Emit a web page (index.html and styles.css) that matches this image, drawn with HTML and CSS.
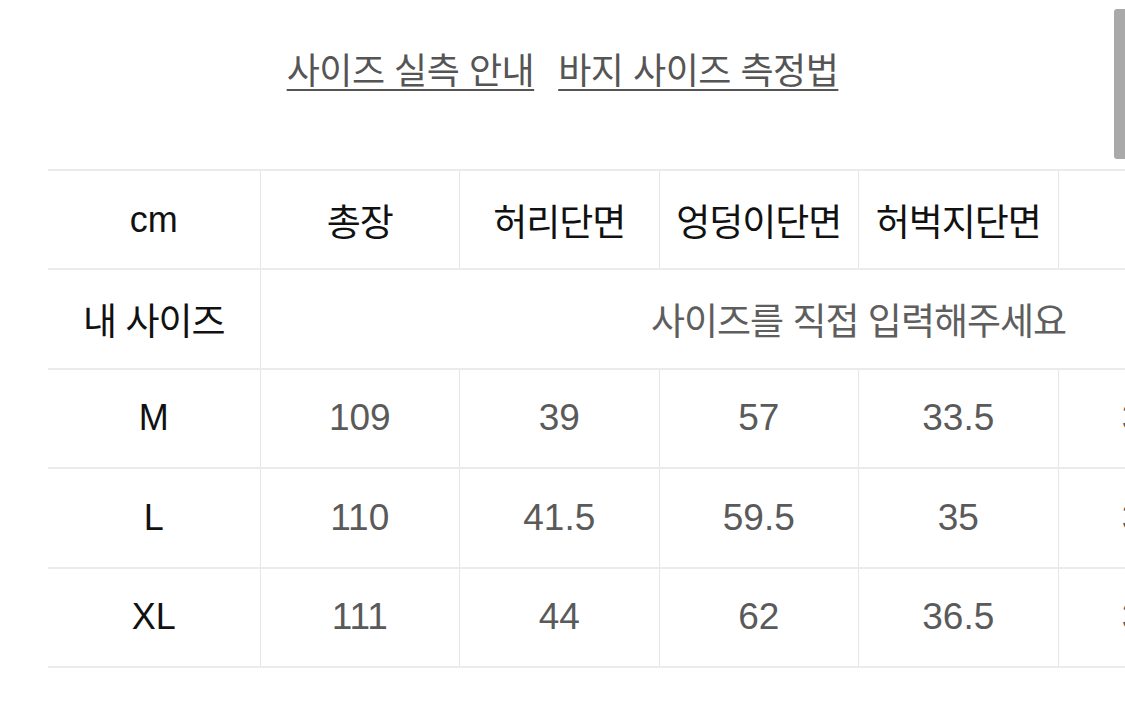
FILE: index.html
```html
<!DOCTYPE html>
<html lang="ko">
<head>
<meta charset="utf-8">
<title>사이즈 실측 안내</title>
<link rel="stylesheet" href="styles.css">
</head>
<body>
<div class="page">
  <nav class="links">
    <a class="link" href="#">사이즈 실측 안내</a>
    <a class="link" href="#">바지 사이즈 측정법</a>
  </nav>
  <div class="table-wrap">
    <table class="size-table">
      <colgroup>
        <col class="c-first">
        <col class="c-data"><col class="c-data"><col class="c-data"><col class="c-data"><col class="c-data"><col class="c-data">
      </colgroup>
      <tr class="head">
        <th class="latin">cm</th>
        <th>총장</th>
        <th>허리단면</th>
        <th>엉덩이단면</th>
        <th>허벅지단면</th>
        <th>밑위</th>
        <th>밑단단면</th>
      </tr>
      <tr>
        <th>내 사이즈</th>
        <td colspan="6" class="hint">사이즈를 직접 입력해주세요</td>
      </tr>
      <tr>
        <th class="latin">M</th>
        <td>109</td><td>39</td><td>57</td><td>33.5</td><td>34.5</td><td>22</td>
      </tr>
      <tr>
        <th class="latin">L</th>
        <td>110</td><td>41.5</td><td>59.5</td><td>35</td><td>35.5</td><td>23</td>
      </tr>
      <tr>
        <th class="latin">XL</th>
        <td>111</td><td>44</td><td>62</td><td>36.5</td><td>36.5</td><td>24</td>
      </tr>
    </table>
  </div>
</div>
<div class="scroll-thumb"></div>
</body>
</html>
```
FILE: styles.css
```css
html, body {
  margin: 0;
  padding: 0;
  background: #ffffff;
  overflow: hidden;
}
body {
  width: 1125px;
  height: 721px;
  font-family: "Liberation Sans", "Noto Sans CJK KR", sans-serif;
}
.page {
  display: flex;
  flex-direction: column;
}
.links {
  display: flex;
  justify-content: center;
  gap: 24px;
  padding-top: 46px;
  height: 169px;
  box-sizing: border-box;
}
.link {
  font-family: "Noto Sans CJK KR", sans-serif;
  font-size: 36px;
  line-height: 44px;
  letter-spacing: -0.5px;
  height: 50px;
  color: #555555;
  text-decoration: underline;
  text-decoration-thickness: 2px;
  text-underline-offset: 5px;
}
.table-wrap {
  padding-left: 48px;
  width: 1500px;
}
.size-table {
  border-collapse: collapse;
  table-layout: fixed;
  width: 1409px;
}
.c-first { width: 212px; }
.c-data { width: 199.5px; }
.size-table th,
.size-table td {
  height: 97.4px;
  padding: 0;
  text-align: center;
  vertical-align: middle;
  border-top: 2px solid #ebebeb;
  border-bottom: 2px solid #ebebeb;
  border-left: 1px solid #e6e6e6;
  border-right: 1px solid #e6e6e6;
  white-space: nowrap;
}
.size-table tr > :first-child {
  border-left: none;
}
.size-table th {
  font-family: "Noto Sans CJK KR", sans-serif;
  font-weight: 400;
  font-size: 37px;
  letter-spacing: -1px;
  color: #111111;
}
.size-table th.latin {
  font-family: "Liberation Sans", sans-serif;
  font-size: 36px;
  letter-spacing: 0;
}
.size-table td {
  font-family: "Liberation Sans", sans-serif;
  font-size: 37px;
  color: #5a5a5a;
}
.size-table td.hint {
  font-family: "Noto Sans CJK KR", sans-serif;
  font-size: 37px;
  letter-spacing: -1px;
  color: #5e5e5e;
}
.scroll-thumb {
  position: fixed;
  top: 9px;
  right: 0;
  width: 11px;
  height: 150px;
  background: #a9a9a9;
  border-radius: 3px 0 0 3px;
}
```
